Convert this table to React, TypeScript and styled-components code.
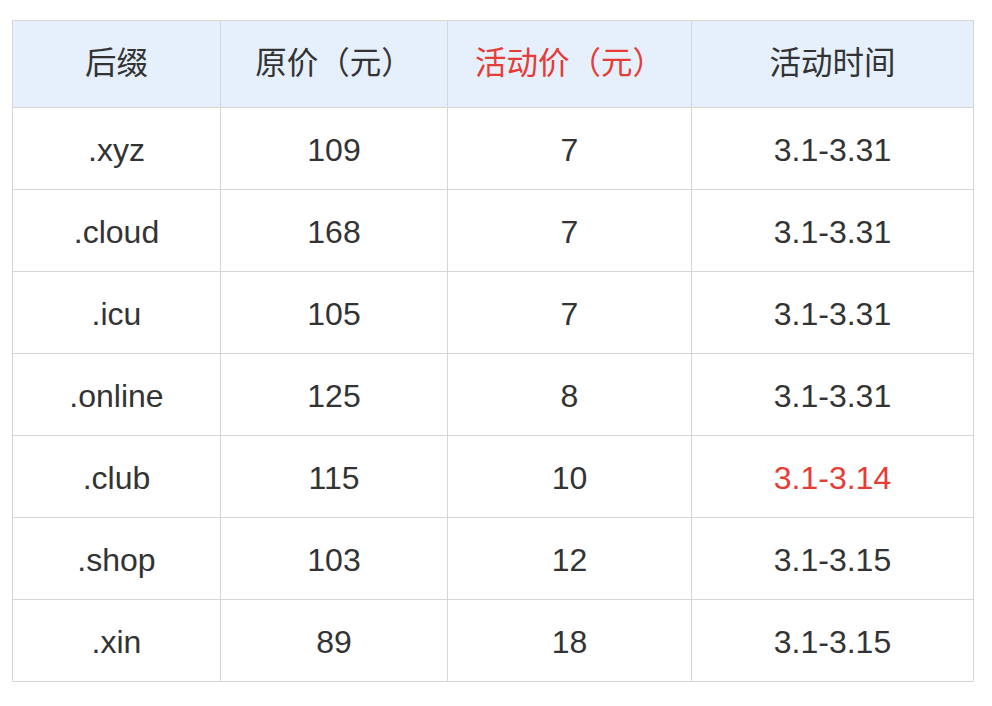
import { FC } from 'react'
import styled, { createGlobalStyle } from 'styled-components'

// ========================================================================
// Style
// ========================================================================

const GlobalStyle = createGlobalStyle`
  html, body {
    margin: 0;
    padding: 0;
    background-color: #fff;
  }
  body {
    font-family: 'Liberation Sans', 'Noto Sans CJK SC', sans-serif;
    color: #333;
  }
`

const Wrap = styled.div`
  padding: 20px 0 0 12px;
`

const Table = styled.table`
  width: 961px;
  border-collapse: collapse;
  table-layout: fixed;
`

const HeadRow = styled.tr`
  height: 87px;
  background-color: #e5f0fc;
`

const Row = styled.tr`
  height: 82px;
`

const Cell = styled.td<{ $red?: boolean }>`
  border: 1px solid #d6d6d6;
  padding: 3px 0 0;
  text-align: center;
  vertical-align: middle;
  font-size: 32px;
  color: ${(p) => (p.$red ? '#e63c36' : '#333')};
`

const HeadCell = styled(Cell).attrs({ as: 'th' })`
  font-weight: normal;
  font-size: 31.5px;
  padding: 0 0 9px;
`

// ========================================================================
// Data
// ========================================================================

const rows = [
  { suffix: '.xyz', price: '109', sale: '7', time: '3.1-3.31' },
  { suffix: '.cloud', price: '168', sale: '7', time: '3.1-3.31' },
  { suffix: '.icu', price: '105', sale: '7', time: '3.1-3.31' },
  { suffix: '.online', price: '125', sale: '8', time: '3.1-3.31' },
  { suffix: '.club', price: '115', sale: '10', time: '3.1-3.14', hot: true },
  { suffix: '.shop', price: '103', sale: '12', time: '3.1-3.15' },
  { suffix: '.xin', price: '89', sale: '18', time: '3.1-3.15' },
]

// ========================================================================
// View
// ========================================================================

const App: FC = () => {
  return (
    <Wrap>
      <GlobalStyle />
      <Table>
        <colgroup>
          <col style={{ width: 208 }} />
          <col style={{ width: 227 }} />
          <col style={{ width: 244 }} />
          <col style={{ width: 282 }} />
        </colgroup>
        <thead>
          <HeadRow>
            <HeadCell>后缀</HeadCell>
            <HeadCell>原价（元）</HeadCell>
            <HeadCell $red>活动价（元）</HeadCell>
            <HeadCell>活动时间</HeadCell>
          </HeadRow>
        </thead>
        <tbody>
          {rows.map((r) => (
            <Row key={r.suffix}>
              <Cell>{r.suffix}</Cell>
              <Cell>{r.price}</Cell>
              <Cell>{r.sale}</Cell>
              <Cell $red={r.hot}>{r.time}</Cell>
            </Row>
          ))}
        </tbody>
      </Table>
    </Wrap>
  )
}

export default App
